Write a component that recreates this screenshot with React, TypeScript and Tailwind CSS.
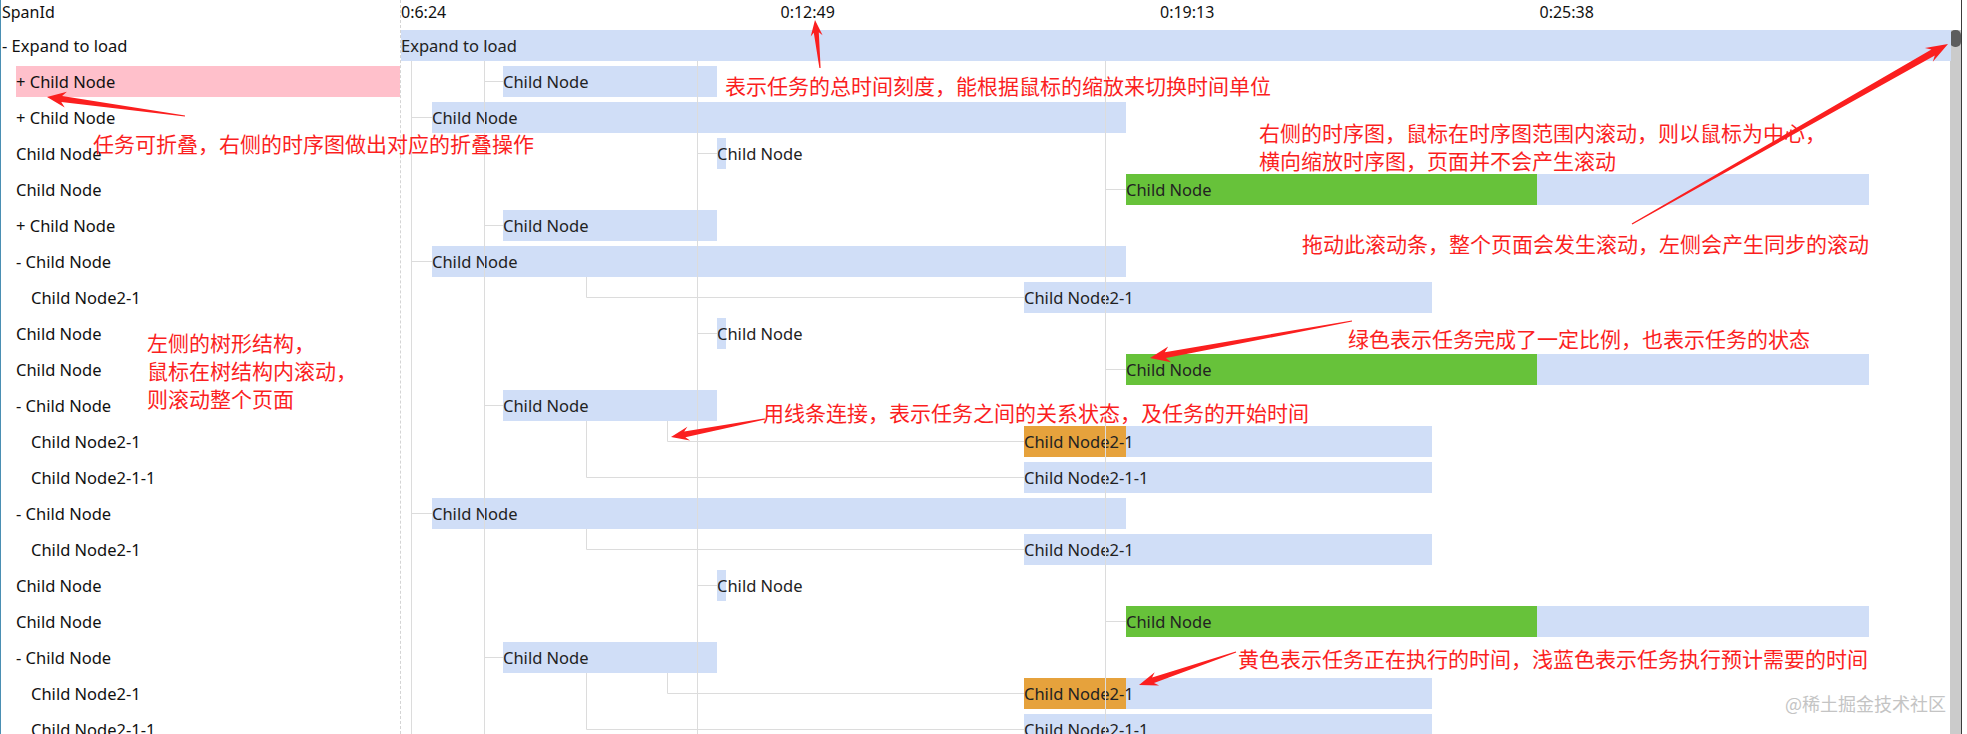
import React from "react";

type Bar = { x: number; w: number; done?: number; doneColor?: string };
type Row = { label: string; level: 0 | 1 | 2; bar: Bar; text: string; active?: boolean };

// bar geometry, x measured from the chart's left edge
const ROOT: Bar = { x: 0, w: 1550 };
const SHORT: Bar = { x: 102, w: 214 };
const LONG: Bar = { x: 31, w: 694 };
const TINY: Bar = { x: 316, w: 9 };
const DONE: Bar = { x: 725, w: 743, done: 411, doneColor: "#67c23a" };
const SUB: Bar = { x: 623, w: 408 };
const RUNNING: Bar = { x: 623, w: 408, done: 102, doneColor: "#e6a23c" };

const rows: Row[] = [
  { label: "- Expand to load", level: 0, bar: ROOT, text: "Expand to load" },
  { label: "+ Child Node", level: 1, bar: SHORT, text: "Child Node", active: true },
  { label: "+ Child Node", level: 1, bar: LONG, text: "Child Node" },
  { label: "Child Node", level: 1, bar: TINY, text: "Child Node" },
  { label: "Child Node", level: 1, bar: DONE, text: "Child Node" },
  { label: "+ Child Node", level: 1, bar: SHORT, text: "Child Node" },
  { label: "- Child Node", level: 1, bar: LONG, text: "Child Node" },
  { label: "Child Node2-1", level: 2, bar: SUB, text: "Child Node2-1" },
  { label: "Child Node", level: 1, bar: TINY, text: "Child Node" },
  { label: "Child Node", level: 1, bar: DONE, text: "Child Node" },
  { label: "- Child Node", level: 1, bar: SHORT, text: "Child Node" },
  { label: "Child Node2-1", level: 2, bar: RUNNING, text: "Child Node2-1" },
  { label: "Child Node2-1-1", level: 2, bar: SUB, text: "Child Node2-1-1" },
  { label: "- Child Node", level: 1, bar: LONG, text: "Child Node" },
  { label: "Child Node2-1", level: 2, bar: SUB, text: "Child Node2-1" },
  { label: "Child Node", level: 1, bar: TINY, text: "Child Node" },
  { label: "Child Node", level: 1, bar: DONE, text: "Child Node" },
  { label: "- Child Node", level: 1, bar: SHORT, text: "Child Node" },
  { label: "Child Node2-1", level: 2, bar: RUNNING, text: "Child Node2-1" },
  { label: "Child Node2-1-1", level: 2, bar: SUB, text: "Child Node2-1-1" },
];

const indent = { 0: "ml-[1px]", 1: "ml-[15px]", 2: "ml-[30px]" };
const ticks = ["0:6:24", "0:12:49", "0:19:13", "0:25:38"];

const HEAD = 30;
const ROW = 36;
const mid = (i: number) => HEAD + ROW * i + 15.5;
const bottom = (i: number) => HEAD + ROW * i + 31;

// connector lines: [from x (vertical line), to x (bar start), row, parent row]
const links: [number, number, number, number][] = [
  [83, 102, 1, 0], [10, 31, 2, 0], [296, 316, 3, 0], [704, 725, 4, 0],
  [83, 102, 5, 0], [10, 31, 6, 0], [185, 623, 7, 6], [296, 316, 8, 0],
  [704, 725, 9, 0], [83, 102, 10, 0], [266, 623, 11, 10], [185, 623, 12, 10],
  [10, 31, 13, 0], [185, 623, 14, 13], [296, 316, 15, 0], [704, 725, 16, 0],
  [83, 102, 17, 0], [266, 623, 18, 17], [185, 623, 19, 17],
];

function Connectors() {
  return (
    <svg className="pointer-events-none absolute inset-0" width="1550" height="734" aria-hidden="true">
      <g stroke="#dcdcdc" strokeWidth="1" fill="none">
        {[10, 83, 296, 704].map((x) => (
          <line key={x} x1={x + 0.5} y1={61} x2={x + 0.5} y2={734} />
        ))}
        {links.map(([from, to, r, p], i) => (
          <path
            key={i}
            d={
              p === 0
                ? `M${from} ${Math.floor(mid(r)) + 0.5}H${to}`
                : `M${from + 0.5} ${bottom(p)}V${Math.floor(mid(r)) + 0.5}H${to}`
            }
          />
        ))}
      </g>
    </svg>
  );
}

function arrowPoints(tx: number, ty: number, hx: number, hy: number, head = 20, hw = 8, nw = 3) {
  const dx = hx - tx;
  const dy = hy - ty;
  const len = Math.hypot(dx, dy);
  const ux = dx / len;
  const uy = dy / len;
  const nx = -uy;
  const ny = ux;
  const nk = [hx - ux * head * 0.78, hy - uy * head * 0.78];
  const bb = [hx - ux * head, hy - uy * head];
  const pts = [
    [tx + nx * 0.6, ty + ny * 0.6],
    [nk[0] + nx * nw, nk[1] + ny * nw],
    [bb[0] + nx * hw, bb[1] + ny * hw],
    [hx, hy],
    [bb[0] - nx * hw, bb[1] - ny * hw],
    [nk[0] - nx * nw, nk[1] - ny * nw],
    [tx - nx * 0.6, ty - ny * 0.6],
  ];
  return pts.map((p) => p.map((v) => v.toFixed(1)).join(",")).join(" ");
}

function Arrows() {
  return (
    <svg className="pointer-events-none absolute inset-0" width="1967" height="734" aria-hidden="true">
      <g fill="#fb1f1f">
        <polygon points={arrowPoints(185, 116, 47, 97, 19, 8, 3)} />
        <polygon points={arrowPoints(820, 68, 815, 20, 16, 6, 2.5)} />
        <polygon points={arrowPoints(1632, 224, 1948, 44, 22, 8, 3.5)} />
        <polygon points={arrowPoints(1352, 321, 1150, 358, 20, 8, 3)} />
        <polygon points={arrowPoints(765, 419, 671, 437, 18, 7, 3)} />
        <polygon points={arrowPoints(1236, 652, 1139, 685, 19, 7, 3)} />
      </g>
    </svg>
  );
}

function BarCell({ bar, text }: { bar: Bar; text: string }) {
  return (
    <div
      className="relative h-[31px] shrink-0 bg-[#d0def7] leading-[31px] whitespace-nowrap text-[#222]"
      style={{ marginLeft: bar.x, width: bar.w }}
    >
      {bar.done ? (
        <div className="absolute left-0 top-0 h-full" style={{ width: bar.done, background: bar.doneColor }} />
      ) : null}
      <span className="relative">{text}</span>
    </div>
  );
}

const note = "absolute whitespace-nowrap text-[21px] leading-[28px] text-[#fb1f1f] font-['Noto_Sans_CJK_SC',sans-serif]";

export default function App() {
  return (
    <div className="relative flex h-[734px] w-[1967px] overflow-hidden bg-white font-['Noto_Sans','Noto_Sans_CJK_SC',sans-serif] text-[16.5px] text-[#111]">
      {/* span tree */}
      <div className="w-[400px] shrink-0 border-l border-[#4a8fb3]">
        <div className="h-[30px] pl-[1px] text-[16px] leading-[24px]">SpanId</div>
        {rows.map((r, i) => (
          <div key={i} className="h-[36px]">
            <div className={`h-[31px] leading-[31px] whitespace-nowrap ${indent[r.level]} ${r.active ? "bg-[#ffc0cb]" : ""}`}>
              {r.label}
            </div>
          </div>
        ))}
      </div>

      {/* timeline */}
      <div className="relative w-[1550px] shrink-0 border-l border-dashed border-[#d4d4d4]">
        <div className="flex h-[30px] text-[16px] leading-[24px]">
          {ticks.map((t) => (
            <div key={t} className="w-[379.5px] shrink-0">
              {t}
            </div>
          ))}
        </div>
        {rows.map((r, i) => (
          <div key={i} className="flex h-[36px]">
            <BarCell bar={r.bar} text={r.text} />
          </div>
        ))}
        <Connectors />
      </div>

      {/* scrollbar */}
      <div className="w-[11px] shrink-0 pt-[30px]">
        <div className="h-full bg-[#cbcbcb]">
          <div className="h-[17px] rounded-[5px] bg-[#5d5d5d]" />
        </div>
      </div>
      <div className="w-[5px] shrink-0 border-l border-[#3c3c3c] bg-white" />

      {/* notes */}
      <div className={`${note} left-[93px] top-[129px]`}>任务可折叠，右侧的时序图做出对应的折叠操作</div>
      <div className={`${note} left-[725px] top-[71px]`}>表示任务的总时间刻度，能根据鼠标的缩放来切换时间单位</div>
      <div className={`${note} left-[1259px] top-[118px]`}>
        右侧的时序图，鼠标在时序图范围内滚动，则以鼠标为中心，
        <br />
        横向缩放时序图，页面并不会产生滚动
      </div>
      <div className={`${note} left-[1302px] top-[229px]`}>拖动此滚动条，整个页面会发生滚动，左侧会产生同步的滚动</div>
      <div className={`${note} left-[147px] top-[328px]`}>
        左侧的树形结构，
        <br />
        鼠标在树结构内滚动，
        <br />
        则滚动整个页面
      </div>
      <div className={`${note} left-[1348px] top-[324px]`}>绿色表示任务完成了一定比例，也表示任务的状态</div>
      <div className={`${note} left-[763px] top-[398px]`}>用线条连接，表示任务之间的关系状态，及任务的开始时间</div>
      <div className={`${note} left-[1238px] top-[644px]`}>黄色表示任务正在执行的时间，浅蓝色表示任务执行预计需要的时间</div>
      <div className="absolute left-[1785px] top-[691px] whitespace-nowrap font-['Noto_Sans_CJK_SC',sans-serif] text-[18px] leading-[24px] text-[#c4c4c4]">
        @稀土掘金技术社区
      </div>

      <Arrows />
    </div>
  );
}
